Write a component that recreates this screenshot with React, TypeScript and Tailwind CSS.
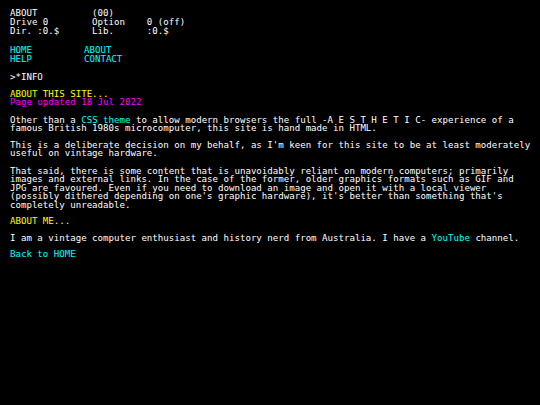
export default function App() {
  const mono = { fontFamily: '"DejaVu Sans Mono", "Liberation Mono", monospace' };
  return (
    <div className="min-h-[405px] w-full bg-black text-white text-[9.1px]" style={mono}>
      <div className="w-[533px] pl-[10px] pt-[8.7px]">
        {/* status header */}
        <div className="whitespace-pre leading-[9.3px]">
          <div>ABOUT          (00)</div>
          <div>Drive 0        Option    0 (off)</div>
          <div>Dir. :0.$      Lib.      :0.$</div>
        </div>

        {/* nav */}
        <div className="mt-[9.6px] grid grid-cols-[74px_1fr] leading-[9.3px] text-[#00ffff]">
          <a>HOME</a>
          <a>ABOUT</a>
          <a>HELP</a>
          <a>CONTACT</a>
        </div>

        <div className="mt-[8.6px] leading-[8.5px]">&gt;*INFO</div>

        <div className="mt-[7.8px] leading-[8.2px]">
          <div className="text-[#ffff00]">ABOUT THIS SITE...</div>
          <div className="text-[#ff00ff]">Page updated 18 Jul 2022</div>
        </div>

        <div className="leading-[8.5px]">
          <p className="mt-[9.5px]">
            Other than a <a className="text-[#00ffff]">CSS theme</a> to allow modern browsers the full -A E S T H E T I C- experience of a famous British 1980s microcomputer, this site is hand made in HTML.
          </p>
          <p className="mt-[8.2px]">
            This is a deliberate decision on my behalf, as I'm keen for this site to be at least moderately useful on vintage hardware.
          </p>
          <p className="mt-[8.8px]">
            That said, there is some content that is unavoidably reliant on modern computers; primarily images and external links. In the case of the former, older graphics formats such as GIF and JPG are favoured. Even if you need to download an image and open it with a local viewer (possibly dithered depending on one's graphic hardware), it's better than something that's completely unreadable.
          </p>
          <p className="mt-[8px] text-[#ffff00]">ABOUT ME...</p>
          <p className="mt-[8.5px]">
            I am a vintage computer enthusiast and history nerd from Australia. I have a <a className="text-[#00ffff]">YouTube</a> channel.
          </p>
          <p className="mt-[7.8px]">
            <a className="text-[#00ffff]">Back to HOME</a>
          </p>
        </div>
      </div>
    </div>
  );
}
